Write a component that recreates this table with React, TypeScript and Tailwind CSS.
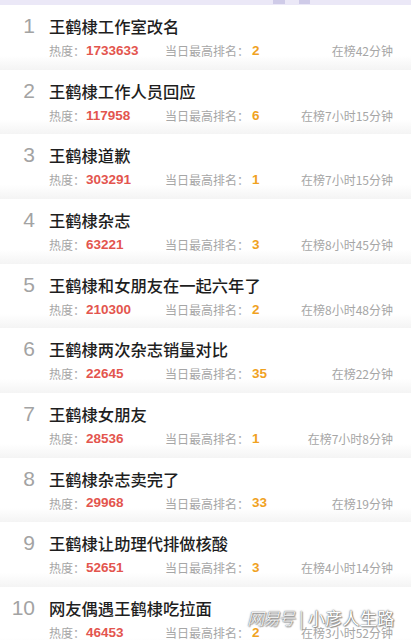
import React from "react";

const rows = [
  { t: "王鹤棣工作室改名", h: "1733633", r: "2", d: "在榜42分钟" },
  { t: "王鹤棣工作人员回应", h: "117958", r: "6", d: "在榜7小时15分钟" },
  { t: "王鹤棣道歉", h: "303291", r: "1", d: "在榜7小时15分钟" },
  { t: "王鹤棣杂志", h: "63221", r: "3", d: "在榜8小时45分钟" },
  { t: "王鹤棣和女朋友在一起六年了", h: "210300", r: "2", d: "在榜8小时48分钟" },
  { t: "王鹤棣两次杂志销量对比", h: "22645", r: "35", d: "在榜22分钟" },
  { t: "王鹤棣女朋友", h: "28536", r: "1", d: "在榜7小时8分钟" },
  { t: "王鹤棣杂志卖完了", h: "29968", r: "33", d: "在榜19分钟" },
  { t: "王鹤棣让助理代排做核酸", h: "52651", r: "3", d: "在榜4小时14分钟" },
  { t: "网友偶遇王鹤棣吃拉面", h: "46453", r: "2", d: "在榜3小时52分钟" },
];

const font = { fontFamily: '"Noto Sans CJK SC", "Noto Sans", sans-serif' };
const num = { fontFamily: '"Liberation Sans", Arial, sans-serif' };

export default function App() {
  return (
    <div className="relative w-[411px] h-[640px] overflow-hidden bg-white" style={font}>
      <div className="relative h-[5px] bg-[#ebe8f7]">
        <div className="absolute left-[273px] top-0 w-[12px] h-[4px] bg-[#cfcbe8]" />
        <div className="absolute left-[299px] top-0 w-[11px] h-[4px] bg-[#cfcbe8]" />
      </div>
      {rows.map((row, i) => (
        <div
          key={i}
          className="relative h-[64.67px] bg-gradient-to-b from-white from-[78%] to-[#f4f4f4]"
        >
          <div className="flex items-center h-[24px] absolute top-[9px] left-0 right-0">
            <div
              className="w-[35px] text-right text-[21px] leading-[24px] text-[#a3a3a3] font-light"
              style={num}
            >
              {i + 1}
            </div>
            <div className="ml-[14px] text-[16.3px] leading-[24px] text-[#1e1e1e] font-medium">
              {row.t}
            </div>
          </div>
          <div className="absolute top-[36px] left-[49px] right-[18px] h-[20px] flex items-center text-[12px] text-[#a6a6a6]">
            <div className="w-[116px] flex items-center">
              <span>热度：</span>
              <span className="text-[13.5px] font-bold text-[#e3554e] ml-[1px]" style={num}>
                {row.h}
              </span>
            </div>
            <div className="flex items-center">
              <span>当日最高排名：</span>
              <span className="text-[13.5px] font-bold text-[#f0a21f] ml-[3px]" style={num}>
                {row.r}
              </span>
            </div>
            <div className="ml-auto">{row.d}</div>
          </div>
        </div>
      ))}
      <div
        className="absolute left-[247px] top-[606px] flex items-center whitespace-nowrap text-white leading-[24px]"
        style={{ textShadow: "0 0 2px #777, 0 0 1px #555, 1px 1px 1px #999" }}
      >
        <span className="w-[48px] italic font-light tracking-[-1.5px] text-[17px]">网易号</span>
        <span className="w-[13px] text-center font-light text-[17px]">|</span>
        <span className="text-[17px] tracking-[0.3px]">小彦人生路</span>
      </div>
    </div>
  );
}
